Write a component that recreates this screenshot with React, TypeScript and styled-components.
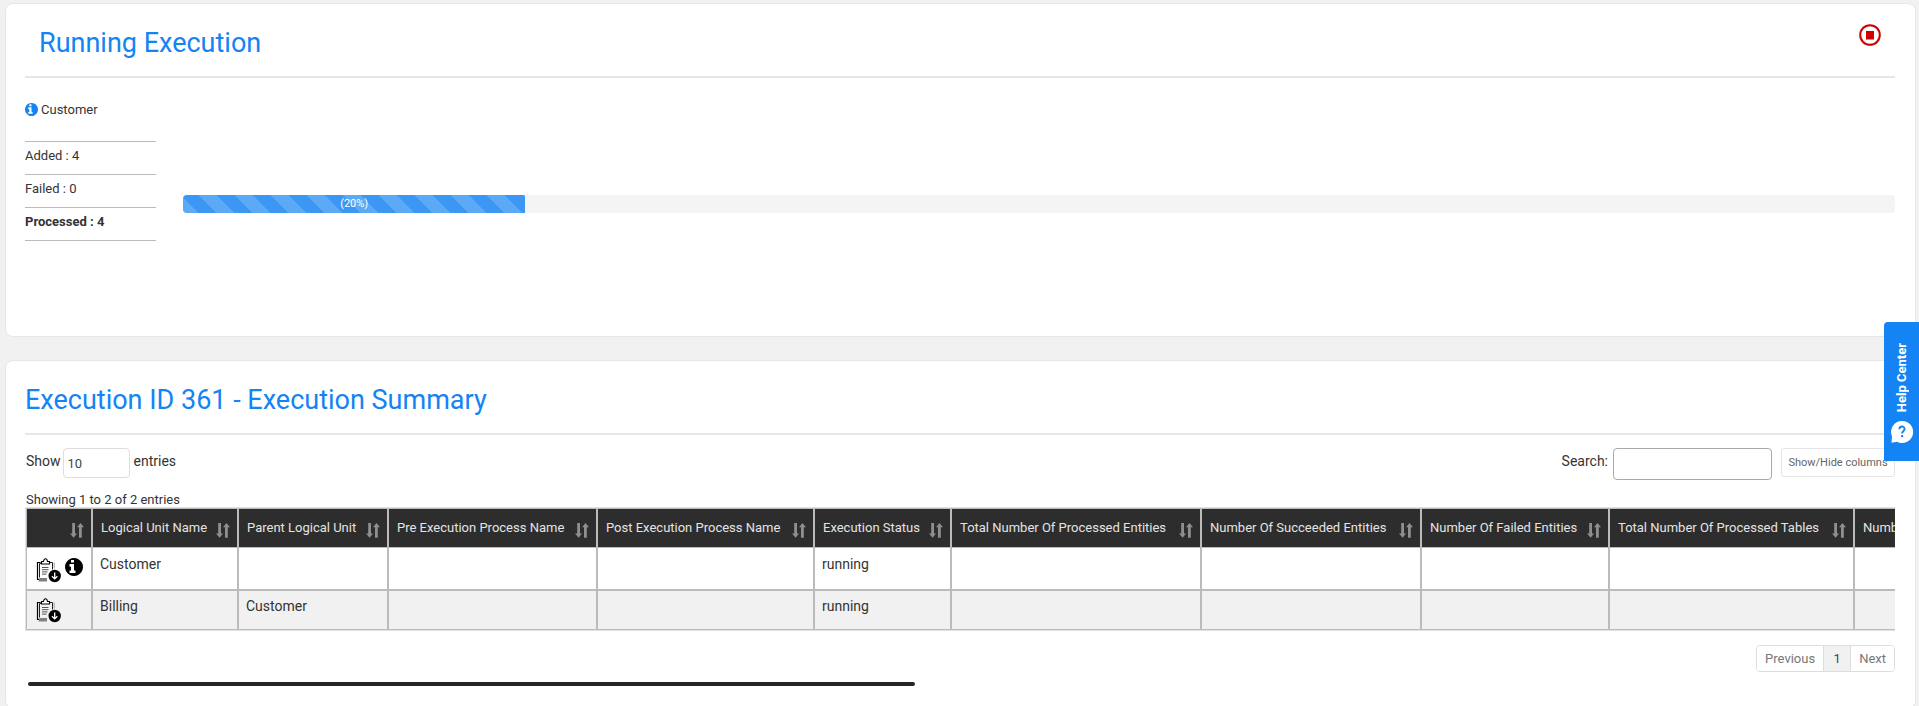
import React from "react";
import styled, { createGlobalStyle } from "styled-components";

const GlobalStyle = createGlobalStyle`
  *, *::before, *::after { box-sizing: border-box; }
  body {
    margin: 0;
    background: #f1f1f1;
    color: #333;
    font: 14px/20px Roboto, "Liberation Sans", sans-serif;
    overflow: hidden;
  }
  button, input, select { font-family: inherit; margin: 0; }
  svg { flex-shrink: 0; }
`;

const Page = styled.main`
  display: flex;
  flex-direction: column;
  gap: 23px;
  padding: 3px 3px 0 5px;
`;

const Card = styled.section<{ $bottom: number }>`
  padding: 16px 20px ${(p) => p.$bottom}px 19px;
  background: #fff;
  border: 1px solid #e7e7e7;
  border-radius: 8px;
`;

const CardHeader = styled.header<{ $inset?: boolean }>`
  display: flex;
  justify-content: space-between;
  height: 58px;
  padding: ${(p) => (p.$inset ? "0 14px" : "0")};
  border-bottom: 2px solid #e7e7e7;
`;

const Title = styled.h2`
  margin: 0;
  padding-top: 7px;
  color: #1483f3;
  font-size: 27px;
  font-weight: 400;
  line-height: 32px;
`;

const IconButton = styled.button`
  display: flex;
  align-self: flex-start;
  padding: 0;
  border: 0;
  background: none;
  cursor: pointer;
`;

const StopButton = styled(IconButton)`
  margin-top: 4px;
`;

const RunName = styled.div`
  display: flex;
  align-items: center;
  gap: 3px;
  margin-top: 22px;
  font-size: 13px;
  color: #333;
  svg { margin-bottom: 2px; }
`;

const RunBody = styled.div`
  display: flex;
  gap: 27px;
  margin-top: 21px;
`;

const Stats = styled.ul`
  flex: 0 0 131px;
  margin: 0;
  padding: 0;
  list-style: none;
  border-top: 1px solid #bbb;
`;

const Stat = styled.li<{ $strong?: boolean }>`
  height: 33px;
  padding-top: 4px;
  border-bottom: 1px solid #bbb;
  font-size: 13px;
  font-weight: ${(p) => (p.$strong ? 700 : 400)};
`;

const Track = styled.div`
  flex: 1;
  height: 18px;
  margin-top: 54px;
  overflow: hidden;
  background: #f4f4f4;
  border-radius: 4px;
`;

const Fill = styled.div`
  height: 100%;
  color: #fff;
  font-size: 11px;
  line-height: 17px;
  text-align: center;
  background: #3b97f3 linear-gradient(45deg, rgba(255, 255, 255, 0.17) 25%, transparent 25%, transparent 50%, rgba(255, 255, 255, 0.17) 50%, rgba(255, 255, 255, 0.17) 75%, transparent 75%) 15px 0 / 36px 36px;
`;

const Toolbar = styled.div`
  display: flex;
  align-items: flex-start;
  justify-content: space-between;
  height: 42px;
  margin-top: 13px;
  padding-left: 1px;
`;

const Control = styled.label`
  display: flex;
  align-items: flex-start;
  line-height: 26px;
`;

const LengthSelect = styled.select`
  appearance: none;
  width: 67px;
  height: 30px;
  margin: 0 4px 0 2px;
  padding: 1px 4px 0;
  color: #444;
  font-size: 13px;
  background: #fff;
  border: 1px solid #ddd;
  border-radius: 4px;
`;

const SearchInput = styled.input`
  width: 159px;
  height: 32px;
  margin-left: 5px;
  background: #fff;
  border: 1px solid #aaa;
  border-radius: 4px;
`;

const Filters = styled.div`
  display: flex;
  align-items: flex-start;
  gap: 9px;
`;

const ColumnsButton = styled.button`
  width: 114px;
  height: 29px;
  padding: 0;
  color: #666;
  font-size: 11px;
  background: #fff;
  border: 1px solid #e4e4e4;
  border-radius: 3px;
`;

const Info = styled.div`
  height: 17px;
  padding-left: 1px;
  font-size: 13px;
`;

const TableScroll = styled.div`
  overflow: hidden;
`;

const Table = styled.table`
  width: 2080px;
  table-layout: fixed;
  border-collapse: separate;
  border-spacing: 0;
  border: 1px solid #e2e2e2;
`;

const HeadCell = styled.th`
  height: 40px;
  padding: 0 7px 0 8px;
  color: #e4e4e4;
  font-size: 13px;
  font-weight: 400;
  text-align: left;
  white-space: nowrap;
  background: #2d2d2d;
  border: 1px solid #bbb;
`;

const HeadContent = styled.div`
  display: flex;
  align-items: center;
  justify-content: space-between;
  svg { margin-top: 4px; }
`;

const Row = styled.tr<{ $striped: boolean }>`
  height: ${(p) => (p.$striped ? 40 : 42)}px;
  background: ${(p) => (p.$striped ? "#f1f1f1" : "#fff")};
`;

const Cell = styled.td<{ $first: boolean }>`
  padding: ${(p) => (p.$first ? 6 : 5)}px 7px 0;
  vertical-align: top;
  border: 1px solid #bbb;
  border-top-width: ${(p) => (p.$first ? 0 : 1)}px;
`;

const Actions = styled.div<{ $first: boolean }>`
  display: flex;
  gap: 4px;
  padding: ${(p) => (p.$first ? 4 : 2)}px 0 0 2px;
`;

const Pager = styled.nav`
  display: flex;
  width: max-content;
  margin: 14px 0 0 auto;
  border: 1px solid #ddd;
  border-radius: 4px;
  overflow: hidden;
`;

const PageButton = styled.button<{ $current?: boolean }>`
  min-width: 27px;
  height: 25px;
  padding: 0 8px;
  color: ${(p) => (p.$current ? "#444" : "#777")};
  font-size: 13px;
  background: ${(p) => (p.$current ? "#f1f1f1" : "#fff")};
  border: 0;
  & + & { border-left: 1px solid #ddd; }
`;

const ScrollTrack = styled.div`
  margin: 10px 0 0 3px;
`;

const ScrollThumb = styled.div`
  height: 4px;
  background: #262626;
  border-radius: 2px;
`;

const HelpTab = styled.button`
  position: fixed;
  top: 322px;
  right: 0;
  display: flex;
  flex-direction: column;
  align-items: center;
  gap: 9px;
  width: 35px;
  height: 139px;
  padding: 21px 0 0;
  color: #fff;
  background: #1483f3;
  border: 0;
  border-radius: 4px 0 0 0;
`;

const HelpText = styled.span`
  writing-mode: vertical-rl;
  transform: rotate(180deg);
  font-size: 13px;
  font-weight: 700;
  line-height: 18px;
`;

const StopIcon = () => (
  <svg width="22" height="22" viewBox="0 0 22 22" aria-hidden="true">
    <circle cx="11" cy="11" r="9.8" fill="none" stroke="#c00" strokeWidth="2" />
    <rect x="7" y="7" width="8" height="8.5" fill="#c00" />
  </svg>
);

const InfoIcon = ({ size, color }: { size: number; color: string }) => (
  <svg width={size} height={size} viewBox="128 128 1536 1536" fill={color} aria-hidden="true">
    <path d="M1024 1376v-160q0-14-9-23t-23-9h-96v-512q0-14-9-23t-23-9h-320q-14 0-23 9t-9 23v160q0 14 9 23t23 9h96v320h-96q-14 0-23 9t-9 23v160q0 14 9 23t23 9h448q14 0 23-9t9-23zM896 480v-160q0-14-9-23t-23-9h-192q-14 0-23 9t-9 23v160q0 14 9 23t23 9h192q14 0 23-9t9-23zM1664 896q0 209-103 385.500t-279.500 279.500-385.500 103-385.500-103-279.500-279.500-103-385.500 103-385.500 279.500-279.500 385.500-103 385.500 103 279.500 279.500 103 385.500z" />
  </svg>
);

const SortIcon = () => (
  <svg width="14" height="15" viewBox="0 0 14 15" fill="#8f8f8f" aria-hidden="true">
    <path d="M2.200 0h2.800v10.500h2L3.600 14.700 0 10.500h2.200z" />
    <path d="M9 14.700h2.800V4.200H14L10.500 0 7 4.200h2z" />
  </svg>
);

const ReportIcon = () => (
  <svg width="25" height="25" viewBox="0 0 25 25" aria-hidden="true">
    <path d="M4.500 4.500H1.500v17H3" fill="none" stroke="#000" strokeWidth="1.200" />
    <path d="M5 5.500H3.500v14M14 4.500h2.500v7" fill="none" stroke="#222" strokeWidth="1" />
    <path d="M18.200 4.500v6" stroke="#888" strokeWidth=".8" />
    <path d="M5.500 6V3.500h2Q8 .8 9.500.8t2 2.700h2V6z" fill="#fff" stroke="#000" strokeWidth="1.100" />
    <path d="M6 9.500h6.500M6 11.700h6.500M6 13.900h5.500M6 16.100h4.500" stroke="#555" strokeWidth="1" />
    <path d="M3.500 20h7.500v3.500H2.500z" fill="#808080" />
    <circle cx="18.700" cy="18" r="6.200" fill="#000" />
    <path d="M18.700 14.500v6M16 18.200l2.700 2.700 2.700-2.700" fill="none" stroke="#fff" strokeWidth="1.300" />
  </svg>
);

const HelpIcon = () => (
  <svg width="22" height="22" viewBox="0 0 22 22" aria-hidden="true">
    <path d="M11 0a11 11 0 1 1-5 20.700L.5 21.800 1 15.500A11 11 0 0 1 11 0z" fill="#fff" />
    <path d="M8.400 8.200c0-3.500 5.200-3.500 5.200-.2 0 2-2.500 2-2.500 4.500" fill="none" stroke="#1483f3" strokeWidth="1.900" />
    <rect x="10.100" y="14" width="2" height="2.200" fill="#1483f3" />
  </svg>
);

const columns = [
  { label: "", width: 66 },
  { label: "Logical Unit Name", width: 146 },
  { label: "Parent Logical Unit", width: 150 },
  { label: "Pre Execution Process Name", width: 209 },
  { label: "Post Execution Process Name", width: 217 },
  { label: "Execution Status", width: 137 },
  { label: "Total Number Of Processed Entities", width: 250 },
  { label: "Number Of Succeeded Entities", width: 220 },
  { label: "Number Of Failed Entities", width: 188 },
  { label: "Total Number Of Processed Tables", width: 245 },
  { label: "Number Of Succeeded Tables", width: 250 },
];

const rows = [
  { name: "Customer", parent: "", status: "running", info: true },
  { name: "Billing", parent: "Customer", status: "running", info: false },
];

const progress = 20;
const scrollThumb = 47.5;

export default function App() {
  return (
    <>
      <GlobalStyle />
      <Page>
        <Card $bottom={95}>
          <CardHeader $inset>
            <Title>Running Execution</Title>
            <StopButton aria-label="Stop execution">
              <StopIcon />
            </StopButton>
          </CardHeader>
          <RunName>
            <InfoIcon size={13} color="#1483f3" />
            Customer
          </RunName>
          <RunBody>
            <Stats>
              <Stat>Added : 4</Stat>
              <Stat>Failed : 0</Stat>
              <Stat $strong>Processed : 4</Stat>
            </Stats>
            <Track role="progressbar" aria-label="Customer" aria-valuenow={progress} aria-valuemin={0} aria-valuemax={100}>
              <Fill style={{ width: `${progress}%` }}>({progress}%)</Fill>
            </Track>
          </RunBody>
        </Card>

        <Card $bottom={22}>
          <CardHeader>
            <Title>Execution ID 361 - Execution Summary</Title>
          </CardHeader>
          <Toolbar>
            <Control>
              Show
              <LengthSelect defaultValue="10">
                <option>10</option>
                <option>25</option>
                <option>50</option>
              </LengthSelect>
              entries
            </Control>
            <Filters>
              <Control>
                Search:
                <SearchInput type="search" />
              </Control>
              <ColumnsButton>Show/Hide columns</ColumnsButton>
            </Filters>
          </Toolbar>
          <Info>Showing 1 to 2 of 2 entries</Info>
          <TableScroll>
            <Table>
              <colgroup>
                {columns.map((c) => (
                  <col key={c.label} style={{ width: c.width }} />
                ))}
              </colgroup>
              <thead>
                <tr>
                  {columns.map((c) => (
                    <HeadCell key={c.label} scope="col">
                      <HeadContent>
                        <span>{c.label}</span>
                        <SortIcon />
                      </HeadContent>
                    </HeadCell>
                  ))}
                </tr>
              </thead>
              <tbody>
                {rows.map((r, i) => (
                  <Row key={r.name} $striped={i % 2 === 1}>
                    <Cell $first={i === 0}>
                      <Actions $first={i === 0}>
                        <IconButton aria-label="Download report">
                          <ReportIcon />
                        </IconButton>
                        {r.info && (
                          <IconButton aria-label="Details">
                            <InfoIcon size={18} color="#000" />
                          </IconButton>
                        )}
                      </Actions>
                    </Cell>
                    {[r.name, r.parent, "", "", r.status, "", "", "", "", ""].map((text, j) => (
                      <Cell key={j} $first={i === 0}>{text}</Cell>
                    ))}
                  </Row>
                ))}
              </tbody>
            </Table>
          </TableScroll>
          <Pager aria-label="Pages">
            <PageButton>Previous</PageButton>
            <PageButton $current>1</PageButton>
            <PageButton>Next</PageButton>
          </Pager>
          <ScrollTrack>
            <ScrollThumb style={{ width: `${scrollThumb}%` }} />
          </ScrollTrack>
        </Card>
      </Page>
      <HelpTab>
        <HelpText>Help Center</HelpText>
        <HelpIcon />
      </HelpTab>
    </>
  );
}
